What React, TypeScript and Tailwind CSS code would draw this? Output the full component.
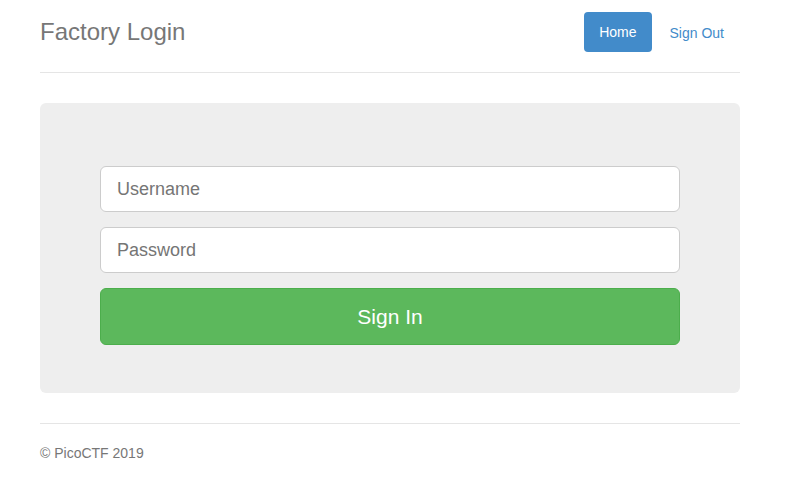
export default function App() {
  return (
    <div className="min-h-screen bg-white font-['Liberation_Sans',Arial,sans-serif] text-[14px] leading-[20px] text-[#333]">
      <div className="ml-[40px] w-[700px] pt-3">
        <div className="flex items-center justify-between border-b border-[#e5e5e5] pb-5">
          <h3 className="text-[24px] leading-[40px] text-[#777]">Factory Login</h3>
          <nav className="flex items-center gap-[2px]">
            <a className="flex h-10 items-center rounded-[4px] bg-[#428bca] px-[15px] text-white">Home</a>
            <a className="flex h-10 items-center rounded-[4px] px-[16px] pt-[2px] text-[#428bca]">Sign Out</a>
          </nav>
        </div>

        <div className="mt-[30px] rounded-[6px] bg-[#eeeeee] px-[60px] pt-[63px] pb-[48px]">
          <form className="flex flex-col">
            <input
              type="text"
              placeholder="Username"
              className="h-[46px] w-full rounded-[6px] border border-[#ccc] bg-white px-4 text-[18px] text-[#555] outline-none placeholder:text-[#757575]"
            />
            <input
              type="password"
              placeholder="Password"
              className="mt-[15px] h-[46px] w-full rounded-[6px] border border-[#ccc] bg-white px-4 text-[18px] text-[#555] outline-none placeholder:text-[#757575]"
            />
            <button
              type="button"
              className="mt-[15px] h-[57px] w-full rounded-[6px] border border-[#4cae4c] bg-[#5cb85c] text-[21px] text-white"
            >
              Sign In
            </button>
          </form>
        </div>

        <footer className="mt-[30px] border-t border-[#e5e5e5] pt-[19px] text-[#777]">
          <p>© PicoCTF 2019</p>
        </footer>
      </div>
    </div>
  );
}
